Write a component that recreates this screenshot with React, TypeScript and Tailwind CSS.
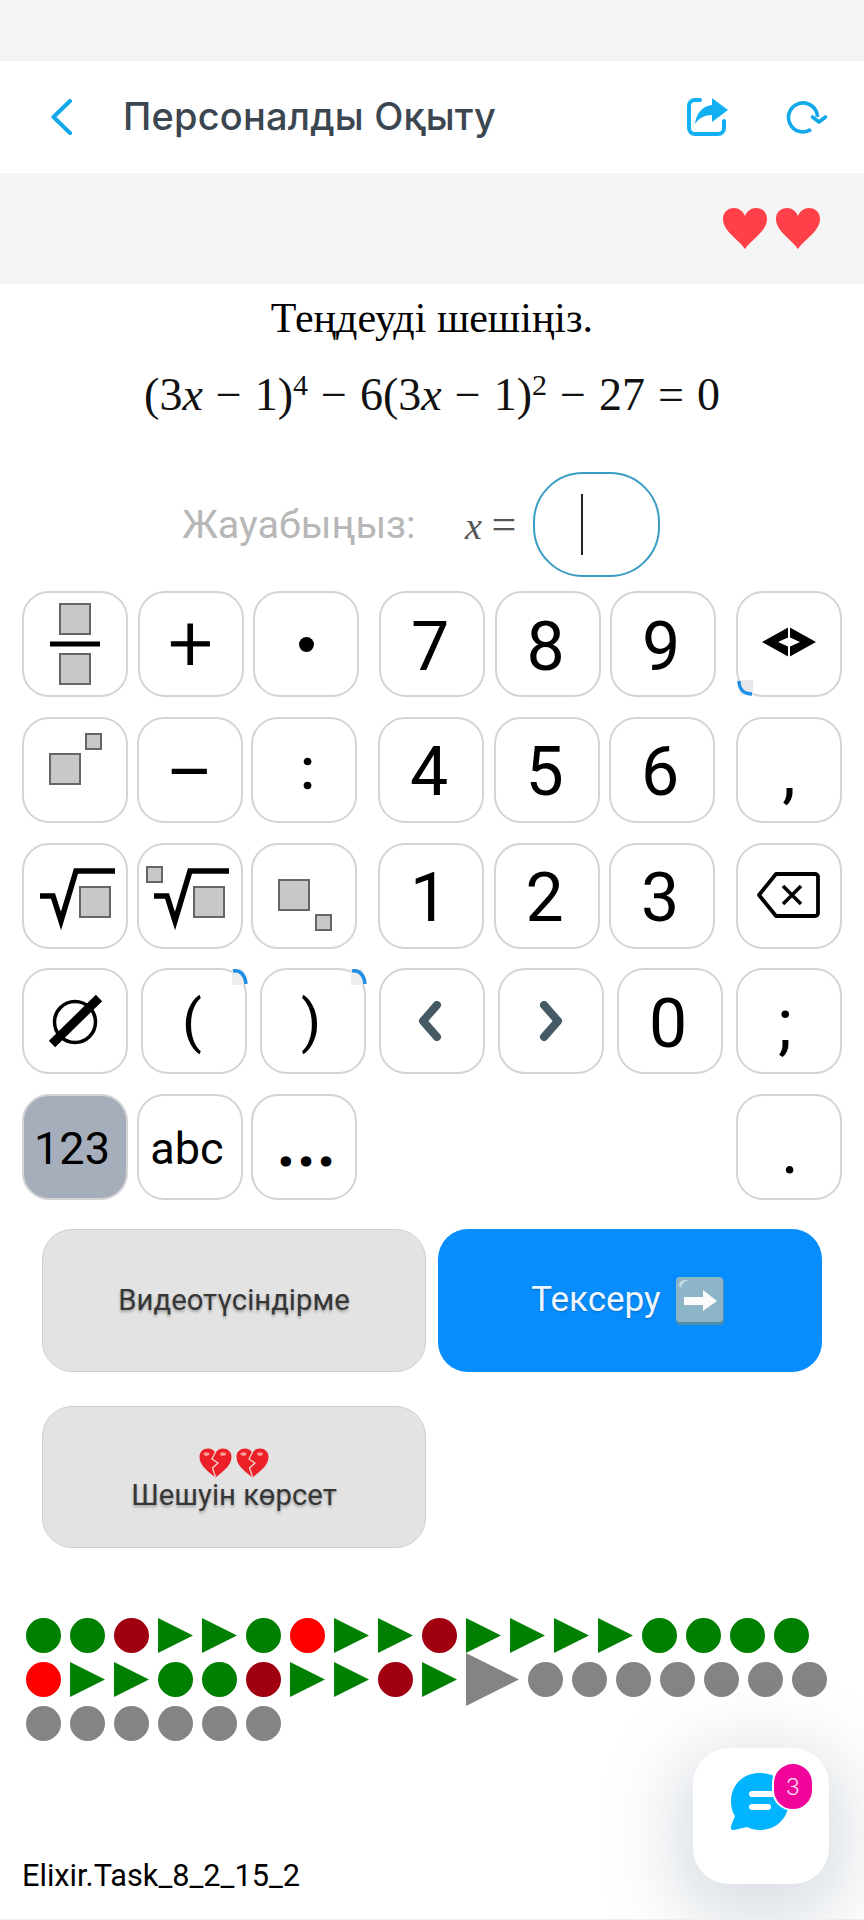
import React from "react";

const roboto = "font-['Roboto',sans-serif]";

function Sq({ x, y, s, sw = 1.5 }: { x: number; y: number; s: number; sw?: number }) {
  return <rect x={x} y={y} width={s} height={s} fill="#c8c8c8" stroke="#666666" strokeWidth={sw} />;
}

function Spin({ corner }: { corner: "tr" | "bl" }) {
  if (corner === "tr") {
    return (
      <svg className="absolute -top-[1px] -right-[3px]" width="16" height="16" viewBox="0 0 16 16">
        <rect x="0" y="0" width="12" height="16" fill="#ededed" />
        <path d="M1 2 C8 1 13 5 14 15" fill="none" stroke="#1f8fe6" strokeWidth="3.5" />
      </svg>
    );
  }
  return (
    <svg className="absolute -bottom-[1px] -left-[1px]" width="16" height="16" viewBox="0 0 16 16">
      <rect x="3" y="0" width="13" height="15" fill="#e8e8ec" />
      <path d="M2 1 C2 9 7 14 15 14" fill="none" stroke="#1f8fe6" strokeWidth="3.5" />
    </svg>
  );
}

function Key({ children, active, cls = "text-[68px] pr-[4px] pt-[5px]" }: { children?: React.ReactNode; active?: boolean; cls?: string }) {
  return (
    <div
      className={`relative flex h-[106px] w-[106px] shrink-0 items-center justify-center rounded-[27px] border-[2.5px] border-[#d4d4d4] leading-none text-black ${roboto} ${cls} ${active ? "bg-[#a5aeba]" : "bg-white"}`}
    >
      {children}
    </div>
  );
}

function Trio({ children, narrow }: { children: React.ReactNode; narrow?: boolean }) {
  return <div className={`flex justify-between ${narrow ? "w-[335px]" : "w-[337px]"}`}>{children}</div>;
}

function Row({ children }: { children: React.ReactNode }) {
  return <div className="flex w-[820px] justify-between">{children}</div>;
}

type S = "g" | "d" | "r" | "n" | "t";

function Shape({ s }: { s: S }) {
  if (s === "t") {
    return (
      <svg width="35" height="35" viewBox="0 0 35 35" className="shrink-0">
        <polygon points="0,0 35,17.5 0,35" fill="#008000" />
      </svg>
    );
  }
  const c = s === "g" ? "bg-[#008000]" : s === "d" ? "bg-[#a00010]" : s === "r" ? "bg-[#ff0000]" : "bg-[#848484]";
  return <div className={`h-[35px] w-[35px] shrink-0 rounded-full ${c}`} />;
}

const seq1: S[] = ["g", "g", "d", "t", "t", "g", "r", "t", "t", "d", "t", "t", "t", "t", "g", "g", "g", "g", "r", "t", "t", "g", "g", "d", "t", "t", "d", "t"];
const seq2: S[] = ["n", "n", "n", "n", "n", "n", "n", "n", "n", "n", "n", "n", "n"];

function BrokenHeart() {
  return (
    <svg width="33" height="30" viewBox="0 0 33 30">
      <path d="M16.5 29.5 C10 24 0.5 18 0.5 9 C0.5 3.5 4.5 0.5 9 0.5 C12.2 0.5 15 2 16.5 5 C18 2 20.8 0.5 24 0.5 C28.5 0.5 32.5 3.5 32.5 9 C32.5 18 23 24 16.5 29.5 Z" fill="#ec2028" />
      <path d="M16.5 4 L13 11 L19 15 L13.5 20 L16.5 29" fill="none" stroke="#f4d8d0" strokeWidth="1.3" />
      <ellipse cx="7.5" cy="6" rx="3" ry="1.8" fill="#ff9a95" />
      <ellipse cx="24" cy="6" rx="3" ry="1.8" fill="#ff9a95" />
    </svg>
  );
}

function Heart() {
  return (
    <svg width="44" height="41" viewBox="0 0 44 41">
      <path d="M22 41 C15 31 0 23 0 11 C0 4 5 0 11 0 C16 0 20 3 22 8 C24 3 28 0 33 0 C39 0 44 4 44 11 C44 23 29 31 22 41 Z" fill="#ff4048" />
    </svg>
  );
}

const rootPath = "M18 54 H31 L39 79 L54 29 H93";

export default function App() {
  return (
    <div className={`relative h-[1920px] w-[864px] overflow-hidden bg-white ${roboto}`}>
      <div className="h-[61px] bg-[#f4f4f4]" />

      <header className="flex h-[112px] items-center bg-white">
        <svg className="ml-[50px]" width="24" height="36" viewBox="0 0 24 36">
          <path d="M20 2 L3.5 18 L20 34" fill="none" stroke="#12a8ea" strokeWidth="4" strokeLinecap="round" strokeLinejoin="round" />
        </svg>
        <h1 className="-mt-[2px] ml-[49px] text-[38px] font-medium tracking-[0.2px] text-[#3b4650] font-['Inter',sans-serif]">Персоналды Оқыту</h1>
        <div className="ml-auto flex items-center">
          <svg width="48" height="45" viewBox="0 0 48 45">
            <path d="M17 5 H12 a6 6 0 0 0 -6 6 V33 a6 6 0 0 0 6 6 H35 a6 6 0 0 0 6 -6 V26" fill="none" stroke="#12b0f2" strokeWidth="4" strokeLinecap="round" />
            <path d="M29 3 L45 15 L29 27 V20 C22 20 16 23 12 29 C13 19 19 11 29 10 Z" fill="#12b0f2" />
          </svg>
          <svg className="ml-[54px] mr-[35px]" width="44" height="36" viewBox="0 0 44 36">
            <path d="M32.5 18 A14.5 14.5 0 1 0 26 30.5" fill="none" stroke="#12a8ea" strokeWidth="3.6" />
            <path d="M27.5 18 L34 23 L40.5 18" fill="none" stroke="#12a8ea" strokeWidth="3.6" strokeLinecap="round" strokeLinejoin="round" />
          </svg>
        </div>
      </header>

      <div className="flex h-[111px] items-center justify-end gap-[9px] bg-[#f5f5f5] pr-[44px]">
        <Heart />
        <Heart />
      </div>

      <p className="flex h-[68px] items-center justify-center text-[42px] leading-none text-black font-['Liberation_Serif',serif]">Теңдеуді шешіңіз.</p>

      <div className="flex h-[90px] items-center justify-center pb-[4px] text-[46px] leading-none text-[#111] [word-spacing:1.5px] font-['Liberation_Serif',serif]">
        <span>(3<i>x</i> − 1)<sup className="text-[30px]">4</sup> − 6(3<i>x</i> − 1)<sup className="text-[30px]">2</sup> − 27 = 0</span>
      </div>

      <div className="mt-[30px] flex h-[105px] items-center pl-[182px]">
        <span className="w-[283px] text-[39.5px] leading-none text-[#b7b7b7]">Жауабыңыз:</span>
        <span className="w-[68px] whitespace-nowrap text-[38px] leading-none text-[#555] font-['Liberation_Serif',serif]"><i>x</i> <span className="text-[44px]">=</span></span>
        <div className="flex h-[105px] w-[127px] items-center rounded-[50px] border-2 border-[#3a9cc2] pl-[46px]">
          <div className="h-[61px] w-[2px] bg-[#222]" />
        </div>
      </div>

      <div className="ml-[22px] mt-[14px] flex flex-col gap-[19.75px]">
        <Row>
          <Trio>
            <Key cls="">
              <svg width="50" height="84" viewBox="0 0 50 84">
                <Sq x={10} y={2} s={30} sw={2} />
                <rect x="0" y="39.5" width="50" height="5" fill="#000" />
                <Sq x={10} y={52} s={30} sw={2} />
              </svg>
            </Key>
            <Key cls="text-[78px] font-light [-webkit-text-stroke:1px_black]">+</Key>
            <Key cls="">
              <div className="h-[15px] w-[15px] rounded-full bg-black" />
            </Key>
          </Trio>
          <Trio>
            <Key>7</Key>
            <Key>8</Key>
            <Key>9</Key>
          </Trio>
          <Key cls="">
            <Spin corner="bl" />
            <svg width="54" height="30" viewBox="0 0 54 30" className="-mt-[5px]">
              <path d="M27 0 L54 15 L27 30 L0 15 Z M27 10 L16 15 L27 20 L38 15 Z" fill="#000" fillRule="evenodd" />
              <rect x="26" y="0" width="2" height="30" fill="#fff" />
            </svg>
          </Key>
        </Row>
        <Row>
          <Trio narrow>
            <Key>
              <svg width="106" height="106" viewBox="0 0 106 106" className="absolute -left-[2.5px] -top-[2.5px]">
                <Sq x={28} y={38} s={30} sw={2} />
                <Sq x={64} y={18} s={15} sw={2} />
              </svg>
            </Key>
            <Key cls="text-[72px] pt-[6px]">–</Key>
            <Key cls="text-[56px] pl-[7px] pb-[2px] [-webkit-text-stroke:1.5px_black]">:</Key>
          </Trio>
          <Trio>
            <Key>4</Key>
            <Key>5</Key>
            <Key>6</Key>
          </Trio>
          <Key cls="text-[68px] pt-[5px]">,</Key>
        </Row>
        <Row>
          <Trio narrow>
            <Key>
              <svg width="106" height="106" viewBox="0 0 106 106" className="absolute -left-[2.5px] -top-[2.5px]">
                <path d={rootPath} fill="none" stroke="#000" strokeWidth="5.5" />
                <Sq x={58} y={45} s={30} sw={2} />
              </svg>
            </Key>
            <Key>
              <svg width="106" height="106" viewBox="0 0 106 106" className="absolute -left-[2.5px] -top-[2.5px]">
                <path d={rootPath} fill="none" stroke="#000" strokeWidth="5.5" />
                <Sq x={58} y={45} s={30} sw={2} />
                <Sq x={11} y={25} s={15} sw={2} />
              </svg>
            </Key>
            <Key>
              <svg width="106" height="106" viewBox="0 0 106 106" className="absolute -left-[2.5px] -top-[2.5px]">
                <Sq x={28} y={38} s={30} sw={2} />
                <Sq x={65} y={73} s={15} sw={2} />
              </svg>
            </Key>
          </Trio>
          <Trio>
            <Key>1</Key>
            <Key>2</Key>
            <Key>3</Key>
          </Trio>
          <Key>
            <svg width="106" height="106" viewBox="0 0 106 106" className="absolute -left-[2.5px] -top-[2.5px]">
              <path d="M40 32 H79 a3 3 0 0 1 3 3 V71 a3 3 0 0 1 -3 3 H40 L23 53 Z" fill="none" stroke="#000" strokeWidth="3.8" strokeLinejoin="round" />
              <path d="M47 44 L65 62 M65 44 L47 62" stroke="#000" strokeWidth="3.5" />
            </svg>
          </Key>
        </Row>
        <Row>
          <Key>
            <svg width="106" height="106" viewBox="0 0 106 106" className="absolute -left-[2.5px] -top-[2.5px]">
              <circle cx="53" cy="54" r="20.5" fill="none" stroke="#000" strokeWidth="3.5" />
              <path d="M30 76 L77 30" stroke="#000" strokeWidth="9" />
            </svg>
          </Key>
          <Key cls="text-[58px] pr-[4px]">
            <Spin corner="tr" />(
          </Key>
          <Key cls="text-[58px] pr-[4px]">
            <Spin corner="tr" />)
          </Key>
          <Key>
            <svg width="24" height="40" viewBox="0 0 24 40" className="-mt-[5px]">
              <path d="M19 4 L5 20 L19 36" fill="none" stroke="#455a64" strokeWidth="8" strokeLinecap="round" strokeLinejoin="round" />
            </svg>
          </Key>
          <Key>
            <svg width="24" height="40" viewBox="0 0 24 40" className="-mt-[5px] ml-[3px]">
              <path d="M5 4 L19 20 L5 36" fill="none" stroke="#455a64" strokeWidth="8" strokeLinecap="round" strokeLinejoin="round" />
            </svg>
          </Key>
          <Key>0</Key>
          <Key cls="text-[68px] pr-[8px] pt-[5px]">;</Key>
        </Row>
        <Row>
          <Trio narrow>
            <Key active cls="text-[45px] pr-[6px] pt-[2px]">123</Key>
            <Key cls="text-[45px] pr-[5px] pt-[2px]">abc</Key>
            <Key cls="text-[48px] tracking-[7.5px] pl-[12px] pt-[2px] [-webkit-text-stroke:5px_black]">...</Key>
          </Trio>
          <Key cls="text-[68px] pl-[2px] pt-[5px]">.</Key>
        </Row>
      </div>

      <div className="ml-[42px] mt-[29px] flex gap-[12px]">
        <div className="flex h-[143px] w-[384px] items-center justify-center rounded-[30px] border border-[#d0d0d0] bg-[#e3e3e3] text-[29.3px] text-[#363636] [text-shadow:0_2px_3px_rgba(0,0,0,0.3)]">Видеотүсіндірме</div>
        <div className="flex h-[143px] w-[384px] items-center justify-center gap-[15px] rounded-[30px] bg-[#078dfd] pr-[5px] text-[35px] text-[#eef6fe] [text-shadow:0_1px_2px_rgba(0,0,0,0.25)]">
          <span>Тексеру</span>
          <svg width="48" height="48" viewBox="0 0 48 48">
            <rect x="0" y="1" width="48" height="47" rx="4" fill="#4d8fae" />
            <rect x="0" y="0" width="47" height="45" rx="4" fill="#8cb6c8" />
            <path d="M3 9 Q3 3 9 3 L13 3 Q6 5 5 11 Z" fill="#c4dae4" />
            <path d="M8 20 H27 V13 L41 24 L27 34 V28 H8 Z" fill="#fbfbfb" />
          </svg>
        </div>
      </div>

      <div className="ml-[42px] mt-[34px] flex h-[142px] w-[384px] flex-col items-center justify-center rounded-[30px] border border-[#d0d0d0] bg-[#e3e3e3] pt-[6px] text-[29.3px] leading-[34px] text-[#363636] [text-shadow:0_2px_3px_rgba(0,0,0,0.3)]">
        <div className="flex gap-[4px]">
          <BrokenHeart />
          <BrokenHeart />
        </div>
        <span>Шешуін көрсет</span>
      </div>

      <div className="ml-[26px] mt-[70px] flex w-[810px] flex-wrap gap-x-[9px] gap-y-[9px]">
        {seq1.map((s, i) => (
          <Shape key={i} s={s} />
        ))}
        <svg width="53" height="53" viewBox="0 0 53 53" className="-my-[9px] shrink-0">
          <polygon points="0,0 53,26.5 0,53" fill="#848484" />
        </svg>
        {seq2.map((s, i) => (
          <Shape key={i} s={s} />
        ))}
      </div>

      <p className="ml-[22px] mt-[117px] text-[30.7px] leading-[36px] text-black">Elixir.Task_8_2_15_2</p>

      <div className="absolute left-[693px] top-[1748px] h-[136px] w-[136px] rounded-[36px] bg-white shadow-[0_20px_70px_20px_rgba(110,130,150,0.25)]">
        <svg className="absolute left-[35px] top-[22px]" width="65" height="62" viewBox="0 0 65 62">
          <path d="M32 3 C49 3 61 15 61 31 C61 47 49 60 32 60 C27 60 23 59 19 57 L6 60 Q2 60 3 56 L7 46 C4 42 3 37 3 31 C3 15 15 3 32 3 Z" fill="#00b4ff" />
          <path d="M24 24 H56" stroke="#fff" strokeWidth="6" strokeLinecap="round" />
          <path d="M24 37 H40" stroke="#fff" strokeWidth="6" strokeLinecap="round" />
        </svg>
        <div className="absolute left-[79px] top-[14px] flex h-[49px] w-[42px] items-center justify-center rounded-full border-2 border-white bg-[#f0049a] text-[24px] font-light leading-none text-[#ffe6f5]">3</div>
      </div>

      <div className="absolute bottom-0 left-0 h-[1px] w-full bg-[#eeeeee]" />
    </div>
  );
}
